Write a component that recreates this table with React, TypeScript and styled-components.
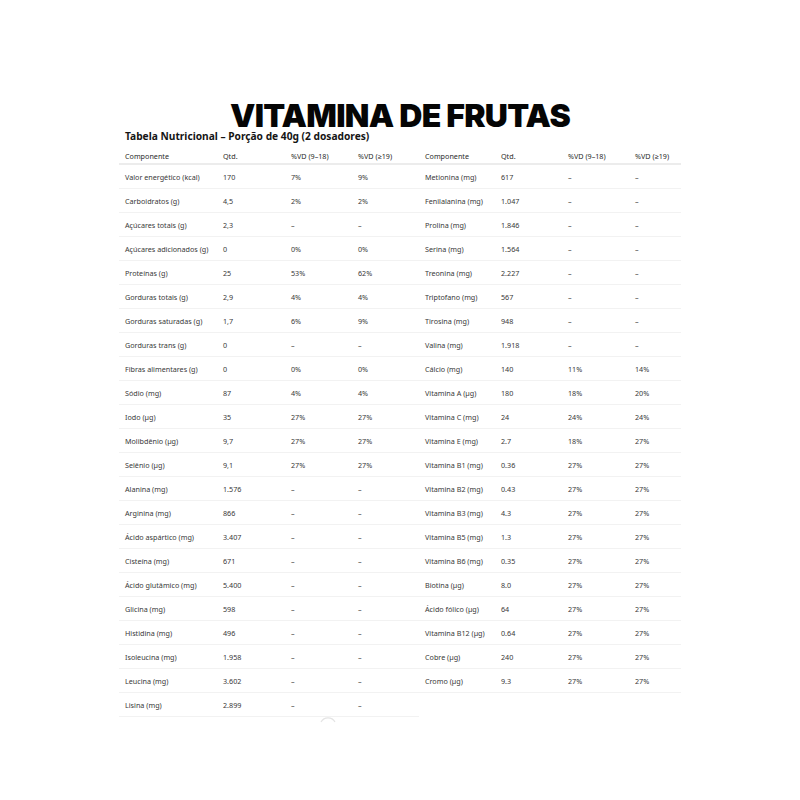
import React from 'react'
import styled, { createGlobalStyle } from 'styled-components'

const GlobalStyle = createGlobalStyle`
  body {
    margin: 0;
    background: #ffffff;
    font-family: 'Noto Sans', 'Open Sans', sans-serif;
  }
`

const Page = styled.div`
  position: relative;
  width: 800px;
  height: 800px;
  padding-top: 101px;
  box-sizing: border-box;
`

const Container = styled.div`
  width: 562px;
  margin: 0 auto;
`

const Title = styled.h1`
  margin: 0;
  text-align: center;
  font-family: Inter, 'DejaVu Sans', sans-serif;
  font-weight: 900;
  font-size: 32px;
  line-height: 29px;
  color: #050505;
  letter-spacing: -0.7px;
`

const Subtitle = styled.h2`
  margin: 0 0 5px 6px;
  font-family: 'Noto Sans', sans-serif;
  font-weight: 700;
  font-size: 10.2px;
  line-height: 13px;
  color: #151515;
`

const Tables = styled.div`
  display: grid;
  grid-template-columns: 300px 262px;
  align-items: start;
`

const Table = styled.table`
  width: 100%;
  border-collapse: collapse;
  table-layout: fixed;
`

const HeadCell = styled.th`
  text-align: left;
  font-weight: 400;
  font-size: 7.2px;
  color: #2a2a2a;
  height: 15px;
  padding: 0 0 0 6px;
  border-bottom: 2px solid #ececec;
  white-space: nowrap;
`

const Cell = styled.td`
  font-size: 7.2px;
  color: #383838;
  height: 23px;
  padding: 0 0 0 6px;
  border-bottom: 1px solid #f2f2f2;
  white-space: nowrap;
`

const Spinner = styled.svg`
  position: absolute;
  left: 318px;
  top: 714px;
`

type Row = [string, string, string, string]

const left: Row[] = [
  ['Valor energético (kcal)', '170', '7%', '9%'],
  ['Carboidratos (g)', '4,5', '2%', '2%'],
  ['Açúcares totais (g)', '2,3', '–', '–'],
  ['Açúcares adicionados (g)', '0', '0%', '0%'],
  ['Proteínas (g)', '25', '53%', '62%'],
  ['Gorduras totais (g)', '2,9', '4%', '4%'],
  ['Gorduras saturadas (g)', '1,7', '6%', '9%'],
  ['Gorduras trans (g)', '0', '–', '–'],
  ['Fibras alimentares (g)', '0', '0%', '0%'],
  ['Sódio (mg)', '87', '4%', '4%'],
  ['Iodo (µg)', '35', '27%', '27%'],
  ['Molibdênio (µg)', '9,7', '27%', '27%'],
  ['Selênio (µg)', '9,1', '27%', '27%'],
  ['Alanina (mg)', '1.576', '–', '–'],
  ['Arginina (mg)', '866', '–', '–'],
  ['Ácido aspártico (mg)', '3.407', '–', '–'],
  ['Cisteína (mg)', '671', '–', '–'],
  ['Ácido glutâmico (mg)', '5.400', '–', '–'],
  ['Glicina (mg)', '598', '–', '–'],
  ['Histidina (mg)', '496', '–', '–'],
  ['Isoleucina (mg)', '1.958', '–', '–'],
  ['Leucina (mg)', '3.602', '–', '–'],
  ['Lisina (mg)', '2.899', '–', '–'],
]

const right: Row[] = [
  ['Metionina (mg)', '617', '–', '–'],
  ['Fenilalanina (mg)', '1.047', '–', '–'],
  ['Prolina (mg)', '1.846', '–', '–'],
  ['Serina (mg)', '1.564', '–', '–'],
  ['Treonina (mg)', '2.227', '–', '–'],
  ['Triptofano (mg)', '567', '–', '–'],
  ['Tirosina (mg)', '948', '–', '–'],
  ['Valina (mg)', '1.918', '–', '–'],
  ['Cálcio (mg)', '140', '11%', '14%'],
  ['Vitamina A (µg)', '180', '18%', '20%'],
  ['Vitamina C (mg)', '24', '24%', '24%'],
  ['Vitamina E (mg)', '2.7', '18%', '27%'],
  ['Vitamina B1 (mg)', '0.36', '27%', '27%'],
  ['Vitamina B2 (mg)', '0.43', '27%', '27%'],
  ['Vitamina B3 (mg)', '4.3', '27%', '27%'],
  ['Vitamina B5 (mg)', '1.3', '27%', '27%'],
  ['Vitamina B6 (mg)', '0.35', '27%', '27%'],
  ['Biotina (µg)', '8.0', '27%', '27%'],
  ['Ácido fólico (µg)', '64', '27%', '27%'],
  ['Vitamina B12 (µg)', '0.64', '27%', '27%'],
  ['Cobre (µg)', '240', '27%', '27%'],
  ['Cromo (µg)', '9.3', '27%', '27%'],
]

const headers = ['Componente', 'Qtd.', '%VD (9–18)', '%VD (≥19)']

const NutritionTable = ({ rows, widths }: { rows: Row[]; widths: number[] }) => (
  <Table>
    <colgroup>
      {widths.map((w, i) => (
        <col key={i} style={{ width: w }} />
      ))}
    </colgroup>
    <thead>
      <tr>
        {headers.map((h) => (
          <HeadCell key={h}>{h}</HeadCell>
        ))}
      </tr>
    </thead>
    <tbody>
      {rows.map((r) => (
        <tr key={r[0]}>
          {r.map((v, i) => (
            <Cell key={i}>{v}</Cell>
          ))}
        </tr>
      ))}
    </tbody>
  </Table>
)

const App = () => {
  return (
    <Page>
      <GlobalStyle />
      <Container>
        <Title>VITAMINA DE FRUTAS</Title>
        <Subtitle>Tabela Nutricional – Porção de 40g (2 dosadores)</Subtitle>
        <Tables>
          <NutritionTable rows={left} widths={[98, 68, 67, 67]} />
          <NutritionTable rows={right} widths={[76, 67, 67, 52]} />
        </Tables>
      </Container>
      <Spinner width="20" height="10" viewBox="0 0 20 10">
        <path d="M3 8 A8 8 0 0 1 17 8" fill="none" stroke="#e4e4e4" strokeWidth="1.2" />
      </Spinner>
    </Page>
  )
}

export default App
